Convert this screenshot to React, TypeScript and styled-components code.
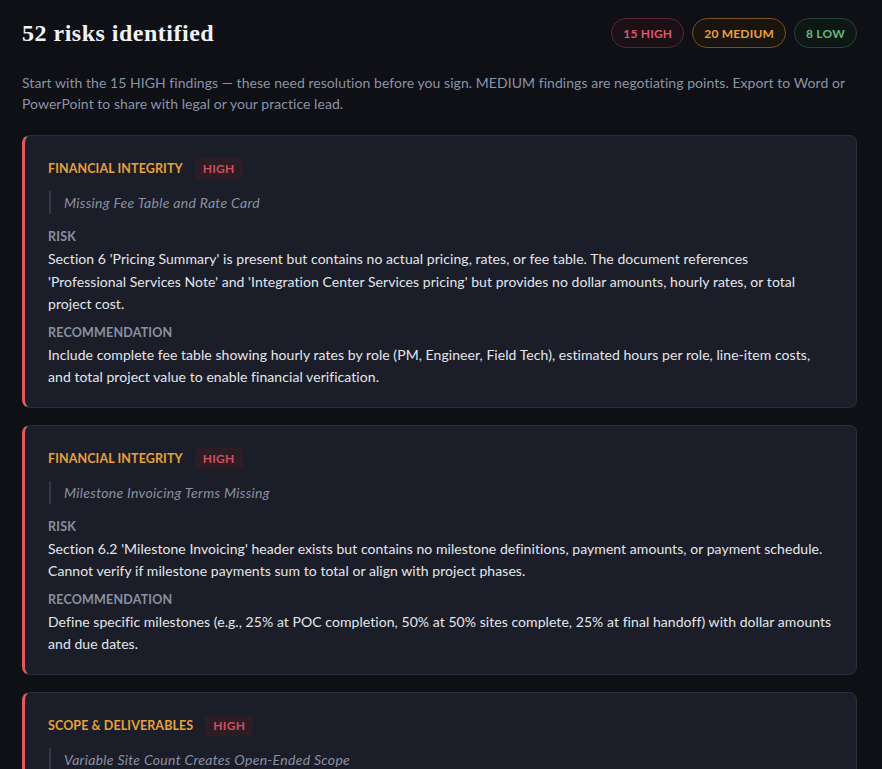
import React from 'react';
import styled, { createGlobalStyle } from 'styled-components';

type Finding = {
    category: string;
    severity: 'HIGH' | 'MEDIUM' | 'LOW';
    title: string;
    risk: string;
    recommendation: string;
};

const findings: Finding[] = [
    {
        category: 'FINANCIAL INTEGRITY',
        severity: 'HIGH',
        title: 'Missing Fee Table and Rate Card',
        risk: "Section 6 'Pricing Summary' is present but contains no actual pricing, rates, or fee table. The document references 'Professional\u00a0Services Note' and 'Integration Center Services pricing' but provides no dollar amounts, hourly rates, or total project cost.",
        recommendation: 'Include complete fee table showing hourly rates by role (PM, Engineer, Field Tech), estimated hours per role, line-item costs, and total project value to enable financial verification.',
    },
    {
        category: 'FINANCIAL INTEGRITY',
        severity: 'HIGH',
        title: 'Milestone Invoicing Terms Missing',
        risk: "Section 6.2 'Milestone Invoicing' header exists but contains no milestone definitions, payment amounts, or payment schedule. Cannot verify if milestone payments sum to total or align with project phases.",
        recommendation: 'Define specific milestones (e.g., 25% at POC completion, 50% at 50% sites complete, 25% at final handoff) with dollar amounts and due dates.',
    },
    {
        category: 'SCOPE & DELIVERABLES',
        severity: 'HIGH',
        title: 'Variable Site Count Creates Open-Ended Scope',
        risk: 'The number of sites is stated as a range rather than a fixed count, leaving the total effort and cost undefined.',
        recommendation: 'Fix the site count or price each additional site separately.',
    },
];

const tones = {
    HIGH: { text: '#e0566a', border: '#5b2634', bg: '#1a1016' },
    MEDIUM: { text: '#e9a23b', border: '#7a5120', bg: '#19140d' },
    LOW: { text: '#5fba7d', border: '#25443a', bg: '#0f1714' },
};

const App = () => {
    return (
        <>
            <GlobalStyle />
            <Page>
                <Header>
                    <Title>52 risks identified</Title>
                    <Pills>
                        <Pill $level="HIGH">15 HIGH</Pill>
                        <Pill $level="MEDIUM">20 MEDIUM</Pill>
                        <Pill $level="LOW">8 LOW</Pill>
                    </Pills>
                </Header>
                <Intro>
                    Start with the 15 HIGH findings — these need resolution before you sign. MEDIUM findings are
                    negotiating points. Export to Word or PowerPoint to share with legal or your practice lead.
                </Intro>
                <List>
                    {findings.map((f, i) => (
                        <Card key={i}>
                            <CardHead>
                                <Category>{f.category}</Category>
                                <Tag>{f.severity}</Tag>
                            </CardHead>
                            <Quote>{f.title}</Quote>
                            <Label>RISK</Label>
                            <Body>{f.risk}</Body>
                            <Label>RECOMMENDATION</Label>
                            <Body>{f.recommendation}</Body>
                        </Card>
                    ))}
                </List>
            </Page>
        </>
    );
};

export default App;

const GlobalStyle = createGlobalStyle`
    html, body {
        margin: 0;
        background: #0e1015;
    }
    body {
        font-family: Lato, "Noto Sans", sans-serif;
        overflow: hidden;
    }
`;

const Page = styled.div`
    padding: 18px 25px 0 22px;
    height: 769px;
    box-sizing: border-box;
    overflow: hidden;
`;

const Header = styled.div`
    display: flex;
    justify-content: space-between;
    align-items: center;
    height: 30px;
`;

const Title = styled.h1`
    margin: 0;
    font-family: "Liberation Serif", serif;
    font-weight: 700;
    font-size: 24px;
    color: #f1f2f5;
    letter-spacing: 0.5px;
`;

const Pills = styled.div`
    display: flex;
    gap: 8px;
`;

const Pill = styled.span<{ $level: keyof typeof tones }>`
    display: inline-flex;
    align-items: center;
    height: 30px;
    padding: 0 11px;
    box-sizing: border-box;
    border-radius: 15px;
    font-size: 12px;
    font-weight: 700;
    letter-spacing: 0.2px;
    color: ${(p) => tones[p.$level].text};
    border: 1px solid ${(p) => tones[p.$level].border};
    background: ${(p) => tones[p.$level].bg};
`;

const Intro = styled.p`
    margin: 24px 0 21px;
    font-size: 14px;
    line-height: 21px;
    letter-spacing: 0.05px;
    color: #8a93a8;
`;

const List = styled.div`
    display: flex;
    flex-direction: column;
    gap: 17px;
`;

const Card = styled.div`
    background: #1b1e28;
    border: 1px solid #2a2e3b;
    border-left: 3px solid #dd5b5b;
    border-radius: 8px;
    padding: 22px 22px 18px 23px;
`;

const CardHead = styled.div`
    display: flex;
    align-items: center;
    gap: 12px;
`;

const Category = styled.span`
    font-size: 12.5px;
    font-weight: 700;
    letter-spacing: 0.1px;
    color: #e8a03a;
`;

const Tag = styled.span`
    font-size: 12px;
    line-height: 15px;
    font-weight: 700;
    letter-spacing: 0.3px;
    color: #d24f5c;
    background: #2c1c24;
    border-radius: 3px;
    padding: 3px 8px;
`;

const Quote = styled.div`
    margin: 12px 0 14px 1px;
    padding: 2px 0 2px 13px;
    border-left: 2px solid #343846;
    font-style: italic;
    font-size: 14px;
    line-height: 19px;
    letter-spacing: 0.3px;
    color: #8a8fa3;
`;

const Label = styled.div`
    margin-top: 8px;
    font-size: 12.5px;
    font-weight: 700;
    letter-spacing: 0.2px;
    color: #8a90a1;
    line-height: 17px;
`;

const Body = styled.p`
    margin: 3px 0 0;
    font-size: 14px;
    line-height: 22.5px;
    letter-spacing: 0.06px;
    color: #e4e6ec;
`;
